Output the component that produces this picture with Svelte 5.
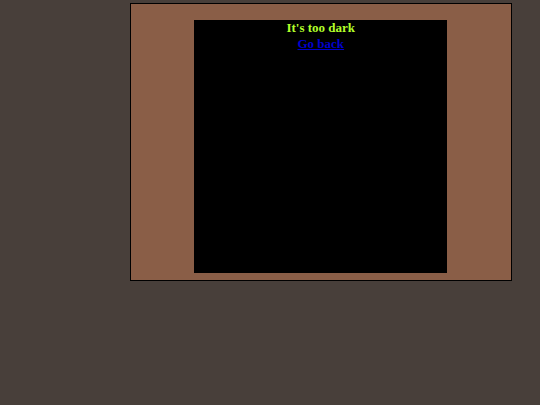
<script lang="ts">
	interface Props {
		message?: string;
		backUrl?: string;
	}

	let { message = "It's too dark", backUrl = '#back' }: Props = $props();
</script>

<main class="panel">
	<section class="room">
		<p class="message">{message}</p>
		<a class="back" href={backUrl}>Go back</a>
	</section>
</main>

<style>
	:global(body) {
		background: #483f3a;
	}

	.panel {
		display: flex;
		justify-content: center;
		margin: 3px 28px 0 24%;
		padding: 16px 16px 7px;
		border: 1px solid #000;
		background: #8a5e47;
	}

	.room {
		flex: 0 1 253px;
		aspect-ratio: 1;
		background: #000;
		font-family: 'Liberation Serif', 'Times New Roman', serif;
		font-size: 13px;
		font-weight: bold;
		line-height: 16px;
		text-align: center;
	}

	.message {
		margin: 0;
		color: #b2ff2a;
	}

	.back {
		color: #0000cd;
	}
</style>
